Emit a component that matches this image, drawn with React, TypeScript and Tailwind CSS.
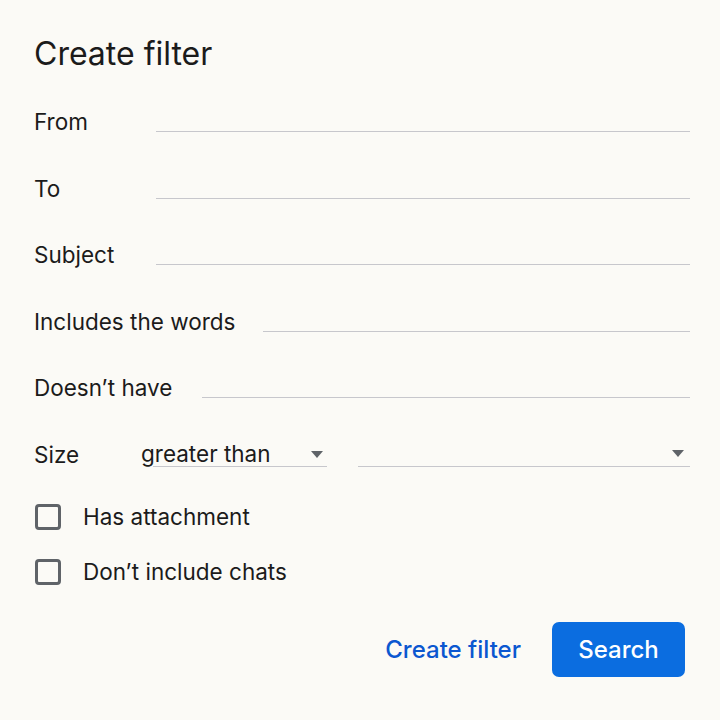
import React from "react";

const font = { fontFamily: "Inter, 'Open Sans', sans-serif" };

function Row({ label, w, children }: { label: string; w: string; children?: React.ReactNode }) {
  return (
    <div className="flex items-start">
      <div className={`text-[22.5px] leading-[28px] text-[#1b1b1b] whitespace-nowrap shrink-0 ${w}`}>{label}</div>
      {children}
    </div>
  );
}

function Line() {
  return <div className="flex-1 h-[24px] border-b border-[#c7c7cc]" />;
}

function Arrow() {
  return (
    <svg width="12" height="7" viewBox="0 0 12 7" className="shrink-0">
      <path d="M0 0 L12 0 L6 7 Z" fill="#5f6368" />
    </svg>
  );
}

function Checkbox({ label }: { label: string }) {
  return (
    <div className="flex items-center h-[28px]">
      <div className="w-[26px] h-[26px] ml-[1px] rounded-[4px] border-[3px] border-[#5f6368]" />
      <div className="ml-[22px] text-[22.5px] leading-[28px] text-[#1b1b1b]">{label}</div>
    </div>
  );
}

export default function App() {
  return (
    <div className="w-[720px] h-[720px] bg-[#fbfaf6] pl-[34px] pr-[30px]" style={font}>
      <div className="pt-[34px] text-[32px] leading-[40px] text-[#1b1b1b]">Create filter</div>
      <div className="mt-[34px] flex flex-col gap-[38.5px]">
        <Row label="From" w="w-[122px]"><Line /></Row>
        <Row label="To" w="w-[122px]"><Line /></Row>
        <Row label="Subject" w="w-[122px]"><Line /></Row>
        <Row label="Includes the words" w="w-[229px]"><Line /></Row>
        <Row label="Doesn’t have" w="w-[168px]"><Line /></Row>
      </div>
      <div className="mt-[39px] flex items-start">
        <div className="w-[106px] text-[22.5px] leading-[28px] text-[#1b1b1b]">Size</div>
        <div className="w-[187px] h-[26px] relative flex items-center justify-between">
          <span className="text-[22.5px] leading-[28px] text-[#1b1b1b] pl-[1px]">greater than</span>
          <span className="mr-[4px]"><Arrow /></span>
          <div className="absolute left-[13px] right-0 bottom-0 border-b border-[#c7c7cc]" />
        </div>
        <div className="ml-[31px] flex-1 h-[26px] flex items-center justify-end border-b border-[#c7c7cc]">
          <span className="mr-[6px]"><Arrow /></span>
        </div>
      </div>
      <div className="mt-[34px] flex flex-col gap-[27px]">
        <Checkbox label="Has attachment" />
        <Checkbox label="Don’t include chats" />
      </div>
      <div className="mt-[36px] flex items-center justify-end pr-[5px]">
        <button className="text-[24px] font-medium text-[#0b57d0] mr-[31px]">Create filter</button>
        <button className="w-[133px] h-[55px] rounded-[7px] bg-[#0b6de0] text-white text-[24px] font-medium">Search</button>
      </div>
    </div>
  );
}
